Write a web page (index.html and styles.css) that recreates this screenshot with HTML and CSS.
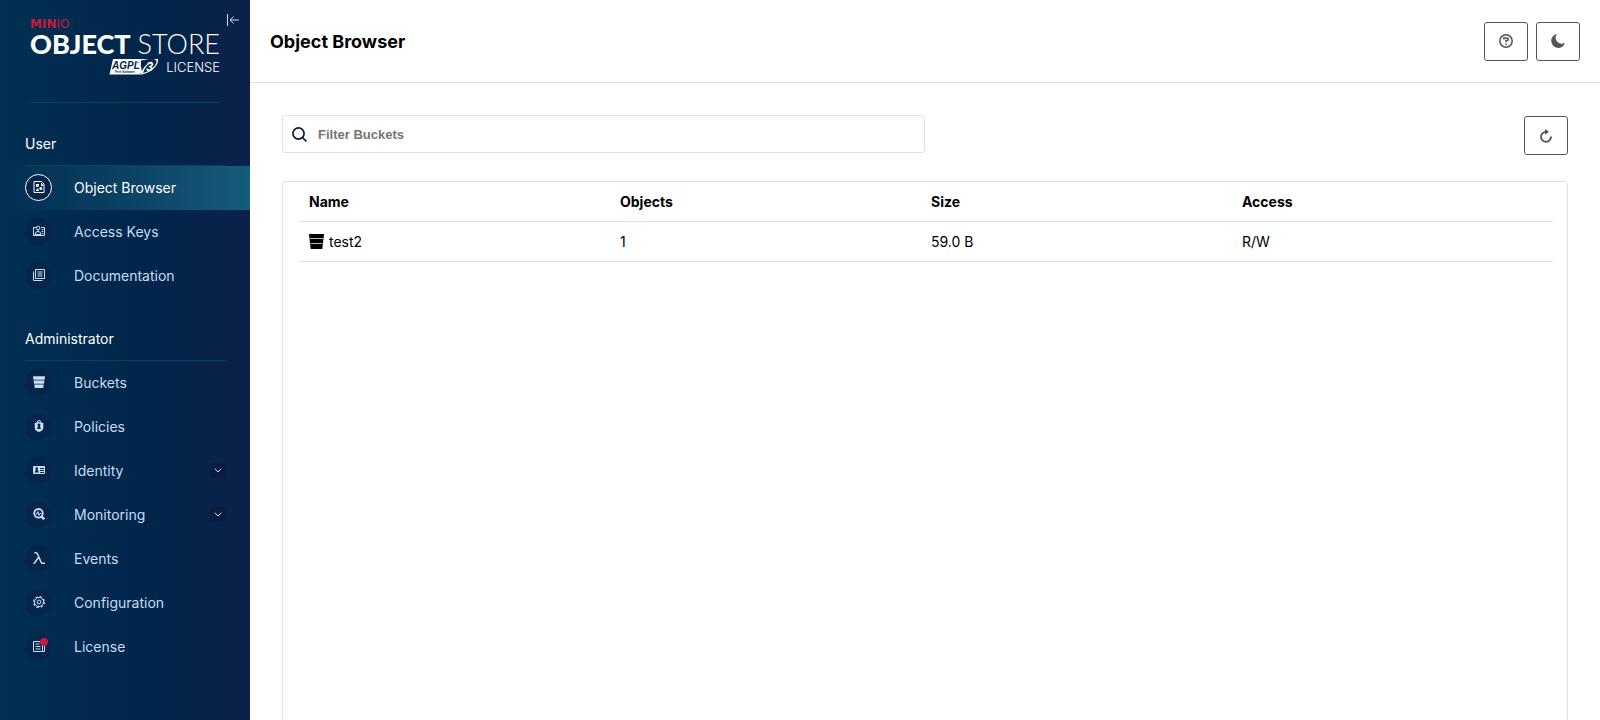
FILE: index.html
```
<!DOCTYPE html>
<html lang="en">
<head>
    <meta charset="UTF-8">
    <title>Object Browser</title>
    <link rel="stylesheet" href="styles.css">
</head>
<body>
<div class="app">
    <aside class="sidebar">
        <div class="brand">
            <div class="brand-name"><b>MIN</b>IO</div>
            <div class="brand-product"><b>OBJECT</b><span>STORE</span></div>
            <div class="brand-license">
                <svg width="50" height="18" viewBox="0 0 50 18" aria-label="AGPL v3">
                    <path d="M4 1H49C50 6 44 14 33 16.500H.5Z" fill="#fff"/>
                    <path d="M32 2.500C38 1 47 0 47.500 3C48 8 39 15 31 15.500" fill="#04264c"/>
                    <path d="M28 4l4 11q4-9 9-12q-8 2-10 8l-1-7z" fill="#04264c"/>
                    <path d="M31 4l2 9q3-7 12-11q-8 4-11 13h-3l-3-10z" fill="#fff"/>
                    <text x="3" y="11" class="agpl">AGPL</text>
                    <text x="37" y="13" class="agpl-three">3</text>
                    <text x="6" y="15" class="agpl-note">Free Software</text>
                </svg>
                <span>LICENSE</span>
            </div>
            <button class="collapse" aria-label="Collapse menu">
                <svg width="12" height="12" viewBox="0 0 12 12" fill="none" stroke="#c6d7e8" stroke-width="1"><path d="M.5 0v12M12 6H3M6.500 2.500L3 6l3.500 3.500"/></svg>
            </button>
        </div>
        <nav class="menu">
            <h2>User</h2>
            <ul>
                <li><a href="#" class="current">
                    <i><svg viewBox="0 0 12 12"><path d="M1 .5h7.500L11 3v8.500H1z" fill="none" stroke="currentColor"/><path d="M3 3h2.800v2.800H3zM8 2h1v1.500h1.200V5H8zM4.500 7L6.200 10H2.800z"/><circle cx="7.800" cy="7.500" r="1.500"/></svg></i>
                    <span>Object Browser</span></a></li>
                <li><a href="#">
                    <i><svg viewBox="0 0 12 12" fill="none" stroke="currentColor"><path d="M3 2.500H.5v8h11v-8H8"/><circle cx="5" cy="3" r="1.800"/><path d="M2 9.500q0-3 3-3t3 3zM5 5v2M8.500 4.500h1.800M8.500 6.500h1.800M9 8.500h1.300"/></svg></i>
                    <span>Access Keys</span></a></li>
                <li><a href="#">
                    <i><svg viewBox="0 0 12 12" fill="none" stroke="currentColor"><path d="M2.500.5h9v9h-9zM.5 2.500v9h9M4.500 3h5M4.500 5h5M4.500 7h5"/></svg></i>
                    <span>Documentation</span></a></li>
            </ul>
            <h2>Administrator</h2>
            <ul>
                <li><a href="#">
                    <i><svg viewBox="0 0 12 12"><path d="M0 .3h12L11.600 3.700H.4zM.6 4.600h10.800L11 7.700H1zM1.200 8.600h9.600l-.6 3.400H1.800z"/></svg></i>
                    <span>Buckets</span></a></li>
                <li><a href="#">
                    <i><svg viewBox="0 0 12 12"><path d="M4.300 2.500q0-2 1.700-2t1.700 2" fill="none" stroke="currentColor"/><path fill-rule="evenodd" d="M1.700 3L6 2l4.300 1v5q0 2.500-4.300 4Q1.700 10.500 1.700 8zM6 3.500a1.400 1.400 0 0 0-.8 2.600L4 9h4L6.800 6.100A1.400 1.400 0 0 0 6 3.500z"/></svg></i>
                    <span>Policies</span></a></li>
                <li><a href="#">
                    <i><svg viewBox="0 0 12 12"><path fill-rule="evenodd" d="M1 2h10q1 0 1 1v6q0 1-1 1H1q-1 0-1-1V3q0-1 1-1zM3.700 3.200a1.300 1.300 0 0 0-.7 2.400L1.500 8.500H6L4.500 5.600a1.300 1.300 0 0 0-.8-2.400zM7 4v1h4V4zM7 6v1h4V6zM7 8v1h4V8z"/></svg></i>
                    <span>Identity</span>
                    <b class="chevron"><svg width="8" height="5" viewBox="0 0 8 5"><path d="M.7.700L4 4 7.300.700"/></svg></b></a></li>
                <li><a href="#">
                    <i><svg viewBox="0 0 12 12" fill="none" stroke="currentColor"><circle cx="5.500" cy="5.300" r="4.300" stroke-width="1.800"/><path d="M8.500 8.500L11.300 11.300" stroke-width="2.400"/><path d="M2.500 6h1.500l1-2.500 1 4 1-2h1.500"/></svg></i>
                    <span>Monitoring</span>
                    <b class="chevron"><svg width="8" height="5" viewBox="0 0 8 5"><path d="M.7.700L4 4 7.300.700"/></svg></b></a></li>
                <li><a href="#">
                    <i><svg viewBox="0 0 12 12" fill="none" stroke="currentColor" stroke-width="1.500"><path d="M1.500.8H3q1 0 1.500 1.200L8 10q.5 1.300 1.500 1.300H12M5.800 5L.8 12"/></svg></i>
                    <span>Events</span></a></li>
                <li><a href="#">
                    <i><svg viewBox="0 0 12 12" fill="none" stroke="currentColor"><circle cx="6" cy="6" r="1.900"/><circle cx="6" cy="6" r="4.500"/><circle cx="6" cy="6" r="5.400" stroke-width="1.200" stroke-dasharray="2.200 2.040"/></svg></i>
                    <span>Configuration</span></a></li>
                <li><a href="#">
                    <i class="badged"><svg viewBox="0 0 12 12" fill="none" stroke="currentColor"><path d="M7 1.500H.5v10h9V5M11.500 5v6.500H9.500M2.500 4h4M2.500 6.500h5M2.500 9h5"/></svg></i>
                    <span>License</span></a></li>
            </ul>
        </nav>
    </aside>
    <main class="page">
        <header class="header">
            <h1>Object Browser</h1>
            <div class="actions">
                <button class="btn" aria-label="Help"><svg width="14" height="14" viewBox="0 0 14 14" fill="none" stroke="#555" stroke-width="1.500"><circle cx="7" cy="7" r="6.200"/><path d="M4.900 5.400V4h3.200q1.200 0 1.200 1.200T8 6.600H7V8.300M7 9.400v1.500"/></svg></button>
                <button class="btn" aria-label="Dark mode"><svg width="14" height="14" viewBox="0 0 14 14" fill="#555"><path d="M6 0A7 7 0 1 0 14 8.700 6 6 0 0 1 6 0z"/></svg></button>
            </div>
        </header>
        <div class="content">
            <div class="toolbar">
                <label class="search">
                    <svg width="15" height="15" viewBox="0 0 15 15" fill="none" stroke="#081c42" stroke-width="1.700"><circle cx="6.500" cy="6.500" r="5.600"/><path d="M10.500 10.500L14.300 14.300"/></svg>
                    <input type="text" placeholder="Filter Buckets" aria-label="Filter Buckets">
                </label>
                <button class="btn" aria-label="Refresh"><svg width="14" height="14" viewBox="0 0 14 14"><path d="M7.500 2.800H7A5 5 0 1 0 12 7.500" fill="none" stroke="#555" stroke-width="1.800"/><path d="M6 0l4 2.800L6 5.800z" fill="#555"/></svg></button>
            </div>
            <div class="panel">
                <table>
                    <thead>
                    <tr><th>Name</th><th>Objects</th><th>Size</th><th>Access</th></tr>
                    </thead>
                    <tbody>
                    <tr>
                        <td><div class="bucket"><svg width="15" height="15" viewBox="0 0 15 15"><path d="M0 0h15l-1.700 15H1.700z"/><path d="M1 4.500h13M1.500 9.500h12" stroke="#bbb"/></svg>test2</div></td>
                        <td>1</td>
                        <td>59.0 B</td>
                        <td>R/W</td>
                    </tr>
                    </tbody>
                </table>
            </div>
        </div>
    </main>
</div>
</body>
</html>
```
FILE: styles.css
```
* {
    box-sizing: border-box;
    margin: 0;
    padding: 0;
}

body {
    font-family: Inter, "Liberation Sans", sans-serif;
    font-size: 14px;
    color: #000;
    background: #fff;
}

ul {
    list-style: none;
}

button {
    cursor: pointer;
}

.app {
    display: flex;
    height: 100vh;
    overflow: hidden;
}

/* sidebar */
.sidebar {
    flex: 0 0 250px;
    background: linear-gradient(90deg, #023052 0%, #00264b 55%, #0c2149 100%);
    color: #fff;
}

.brand {
    position: relative;
    height: 103px;
    margin: 0 30px;
    padding-top: 18px;
    border-bottom: 1px solid #0d4164;
}

.brand-name {
    font-family: "DejaVu Sans", sans-serif;
    font-size: 12px;
    line-height: 12px;
    color: #c51b3f;
}

.brand-product {
    display: flex;
    justify-content: space-between;
    font-family: Lato, sans-serif;
    font-size: 27px;
    line-height: 28px;
}

.brand-product b {
    font-weight: 900;
}

.brand-product span {
    font-weight: 300;
}

.brand-license {
    display: flex;
    justify-content: flex-end;
    align-items: center;
    gap: 7px;
    font-size: 13px;
    font-weight: 300;
    line-height: 18px;
}

.agpl {
    font: italic bold 10px "Liberation Sans", sans-serif;
    fill: #04264c;
}

.agpl-three {
    font: italic bold 13px "Liberation Sans", sans-serif;
    fill: #fff;
}

.agpl-note {
    font: bold 3px "Liberation Sans", sans-serif;
    fill: #04264c;
}

.collapse {
    position: absolute;
    top: 14px;
    right: -19px;
    display: flex;
    border: 0;
    background: none;
}

.menu h2 {
    margin: 0 25px;
    padding: 30px 0 10px;
    font-size: 14px;
    font-weight: 400;
    line-height: 22px;
    border-bottom: 1px solid #0d4164;
}

.menu a {
    display: flex;
    align-items: center;
    height: 44px;
    padding: 0 25px 2px;
    color: #c8dcf4;
    text-decoration: none;
}

.menu .current {
    color: #fff;
    background: linear-gradient(90deg, rgba(22, 92, 124, 0) 0%, #165c7c 100%);
}

.menu i {
    display: flex;
    align-items: center;
    justify-content: center;
    width: 27px;
    height: 27px;
    margin-right: 22px;
    border-radius: 50%;
    background: #05254b;
}

.menu i svg {
    width: 12px;
    height: 12px;
    fill: currentColor;
}

.menu i svg[fill="none"] {
    fill: none;
}

.menu .current i {
    border: 1px solid #fff;
}

.badged {
    position: relative;
}

.badged::after {
    content: "";
    position: absolute;
    top: 5px;
    right: 4px;
    width: 8px;
    height: 8px;
    border-radius: 50%;
    background: #c51b3f;
}

.chevron {
    display: flex;
    align-items: center;
    justify-content: center;
    width: 15px;
    height: 15px;
    margin-left: auto;
    border-radius: 2px;
    background: #081c42;
}

.chevron path {
    fill: none;
    stroke: #c8dcf4;
}

/* page */
.page {
    flex: 1;
    min-width: 0;
}

.header {
    display: flex;
    align-items: center;
    justify-content: space-between;
    height: 83px;
    padding: 0 20px;
    border-bottom: 1px solid #e2e2e2;
}

.header h1 {
    font-size: 18px;
    font-weight: 700;
}

.actions {
    display: flex;
    gap: 8px;
}

.btn {
    display: flex;
    align-items: center;
    justify-content: center;
    width: 44px;
    height: 39px;
    border: 1px solid #555;
    border-radius: 3px;
    background: #fff;
}

.content {
    padding: 32px;
}

.toolbar {
    display: flex;
    align-items: flex-end;
    justify-content: space-between;
    height: 40px;
    margin-bottom: 26px;
}

.search {
    display: flex;
    align-self: flex-start;
    align-items: center;
    width: 50%;
    height: 38px;
    padding: 0 9px;
    gap: 11px;
    border: 1px solid #e2e2e2;
    border-radius: 3px;
}

.search input {
    flex: 1;
    border: 0;
    outline: 0;
    font: bold 13px "Liberation Sans", sans-serif;
}

.search input::placeholder {
    color: #757575;
}

.panel {
    min-height: calc(100vh - 160px);
    padding: 0 14px 14px 16px;
    border: 1px solid #e2e2e2;
    border-radius: 3px;
}

.panel table {
    width: 100%;
    table-layout: fixed;
    border-collapse: collapse;
}

.panel th,
.panel td {
    width: 24.8%;
    height: 40px;
    padding-left: 10px;
    text-align: left;
    border-bottom: 1px solid #e2e2e2;
}

.panel th {
    height: 39px;
}

.panel th:last-child {
    width: auto;
}

.bucket {
    display: flex;
    align-items: center;
    gap: 5px;
}
```
